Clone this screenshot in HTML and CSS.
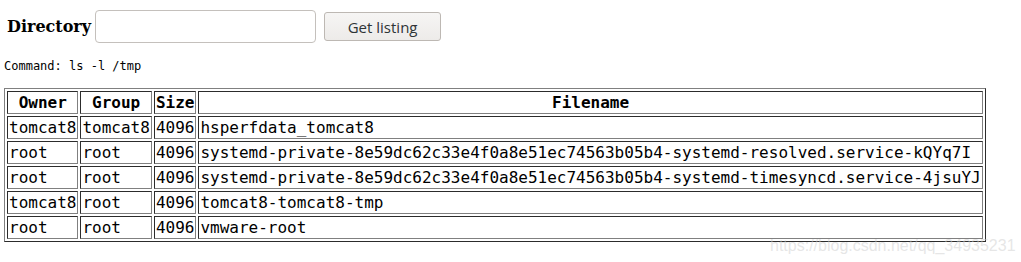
FILE: index.html
```html
<!DOCTYPE html>
<html>
<head>
<meta charset="utf-8">
<link rel="stylesheet" href="styles.css">
</head>
<body>
<form class="dir-form">
  <label class="dir-label" for="dir">Directory</label>
  <input class="dir-input" id="dir" type="text">
  <button class="dir-button" type="button">Get listing</button>
</form>
<div class="command">Command: ls -l /tmp</div>
<table class="listing">
  <tr><th>Owner</th><th>Group</th><th>Size</th><th>Filename</th></tr>
  <tr><td>tomcat8</td><td>tomcat8</td><td>4096</td><td>hsperfdata_tomcat8</td></tr>
  <tr><td>root</td><td>root</td><td>4096</td><td>systemd-private-8e59dc62c33e4f0a8e51ec74563b05b4-systemd-resolved.service-kQYq7I</td></tr>
  <tr><td>root</td><td>root</td><td>4096</td><td>systemd-private-8e59dc62c33e4f0a8e51ec74563b05b4-systemd-timesyncd.service-4jsuYJ</td></tr>
  <tr><td>tomcat8</td><td>root</td><td>4096</td><td>tomcat8-tomcat8-tmp</td></tr>
  <tr><td>root</td><td>root</td><td>4096</td><td>vmware-root</td></tr>
</table>
<div class="watermark">https://blog.csdn.net/qq_34935231</div>
</body>
</html>
```
FILE: styles.css
```css
html, body {
  margin: 0;
  padding: 0;
  background: #fff;
}
body {
  padding: 0 4px;
  position: relative;
  height: 262px;
  overflow: hidden;
}
.dir-form {
  display: flex;
  align-items: center;
  padding: 10px 0 0 3px;
  margin: 0;
  height: 33px;
}
.dir-label {
  font-family: "DejaVu Serif", serif;
  font-weight: bold;
  font-size: 16px;
  color: #000;
  margin-right: 4px;
}
.dir-input {
  box-sizing: border-box;
  width: 221px;
  height: 33px;
  border: 1px solid #c4c0bc;
  border-radius: 4px;
  background: #fff;
  margin: 0 8px 0 0;
  padding: 0 6px;
}
.dir-button {
  box-sizing: border-box;
  width: 117px;
  height: 29px;
  border: 1px solid #bdb8b3;
  border-radius: 3px;
  background: linear-gradient(#f6f5f4, #edebe9);
  font-family: "Open Sans", "Noto Sans", sans-serif;
  font-size: 15px;
  color: #2e3436;
  padding: 0;
  margin: 0;
}
.command {
  font-family: "DejaVu Sans Mono", monospace;
  font-size: 12px;
  line-height: 14px;
  margin-top: 16px;
  color: #000;
}
.listing {
  margin-top: 15px;
  border: 1px outset #808080;
  border-spacing: 2px;
  font-family: "DejaVu Sans Mono", monospace;
  font-size: 16px;
  color: #000;
}
.listing th, .listing td {
  border: 1px inset #808080;
  padding: 1px;
  white-space: nowrap;
}
.listing td {
  text-align: left;
}
.watermark {
  position: absolute;
  left: 770px;
  top: 237px;
  font-family: "Liberation Sans", Arial, sans-serif;
  font-size: 16px;
  color: rgba(205, 205, 205, 0.5);
}
```
